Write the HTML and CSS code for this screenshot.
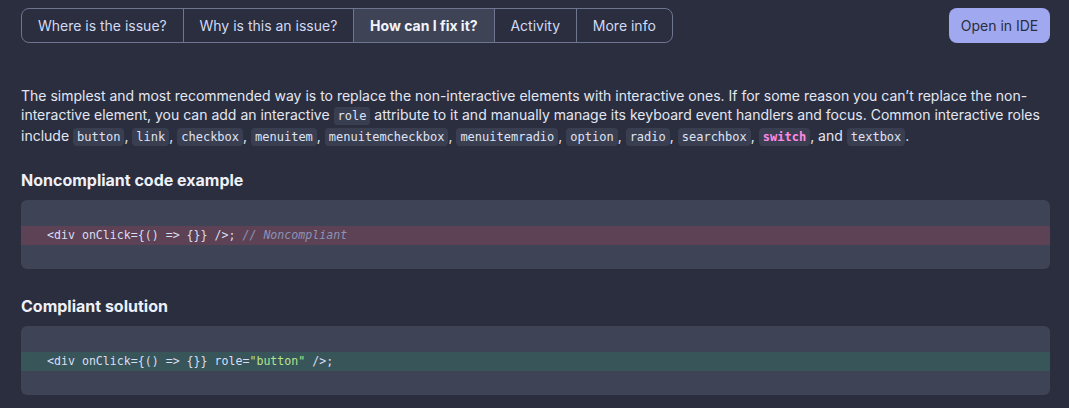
FILE: index.html
```html
<!DOCTYPE html>
<html>
<head>
<meta charset="utf-8">
<link rel="stylesheet" href="styles.css">
</head>
<body>
<div class="page">
  <div class="topbar">
    <nav class="tabs">
      <button class="tab">Where is the issue?</button>
      <button class="tab">Why is this an issue?</button>
      <button class="tab active">How can I fix it?</button>
      <button class="tab">Activity</button>
      <button class="tab">More info</button>
    </nav>
    <button class="ide">Open in IDE</button>
  </div>
  <p class="text">The simplest and most recommended way is to replace the non-interactive elements with interactive ones. If for some reason you can’t replace the non-interactive element, you can add an interactive <code>role</code> attribute to it and manually manage its keyboard event handlers and focus. Common interactive roles include <code>button</code>, <code>link</code>, <code>checkbox</code>, <code>menuitem</code>, <code>menuitemcheckbox</code>, <code>menuitemradio</code>, <code>option</code>, <code>radio</code>, <code>searchbox</code>, <code class="hl">switch</code>, and <code>textbox</code>.</p>
  <h3 class="heading first">Noncompliant code example</h3>
  <pre class="code"><div class="line bad">&lt;div onClick={() =&gt; {}} /&gt;; <span class="cm">// Noncompliant</span></div></pre>
  <h3 class="heading second">Compliant solution</h3>
  <pre class="code"><div class="line good">&lt;div onClick={() =&gt; {}} role=<span class="str">"button"</span> /&gt;;</div></pre>
</div>
</body>
</html>
```
FILE: styles.css
```css
html, body {
  margin: 0;
  background: #2a2e3e;
}
.page {
  padding: 8px 19px 0 21px;
  font-family: Inter, "Noto Sans", sans-serif;
  color: #dfe3f5;
}
.topbar {
  display: flex;
  justify-content: space-between;
  align-items: flex-start;
}
.tabs {
  display: flex;
  border: 1px solid #6e7591;
  border-radius: 8px;
  overflow: hidden;
}
.tab {
  font-family: inherit;
  font-size: 14px;
  color: #d3daf5;
  background: transparent;
  border: 0;
  border-left: 1px solid #6e7591;
  height: 33px;
  padding: 0 15.9px;
  margin: 0;
}
.tab:first-child {
  border-left: 0;
}
.tab.active {
  background: #3f4356;
  font-weight: 700;
  color: #f2f4fb;
}
.ide {
  font-family: inherit;
  font-size: 14px;
  color: #2a2e3e;
  background: #a0a8f0;
  border: 0;
  border-radius: 8px;
  height: 35px;
  width: 101px;
  padding: 0;
  margin-right: 0;
}
.text {
  margin: 43px 0 0;
  font-size: 14px;
  line-height: 19px;
  color: #e4e7f3;
}
.text code {
  font-family: "DejaVu Sans Mono", monospace;
  font-size: 12px;
  background: #3a3e51;
  color: #dfe3f5;
  border-radius: 4px;
  padding: 2px 4px;
}
.text code.hl {
  color: #ff8ae6;
  font-weight: 700;
}
.heading {
  font-size: 16px;
  line-height: 22px;
  font-weight: 700;
  color: #eef0f8;
}
.heading.first {
  margin: 22px 0 0;
}
.heading.second {
  margin: 26px 0 0;
}
.code {
  margin: 9px 0 0;
  background: #3f4356;
  border-radius: 6px;
  padding: 26px 0 24px;
  font-family: "DejaVu Sans Mono", monospace;
  font-size: 11.6px;
  line-height: 19px;
  color: #d8def5;
}
.line {
  padding-left: 26px;
}
.line.bad {
  background: #5c4254;
}
.line.good {
  background: #38555a;
}
.cm {
  color: #8a94b8;
  font-style: italic;
}
.str {
  color: #b4e38c;
}
```
